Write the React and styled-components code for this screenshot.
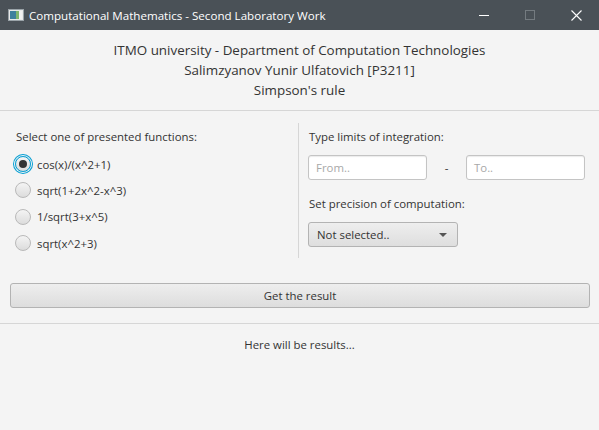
import styled, { createGlobalStyle } from "styled-components";

const GlobalStyle = createGlobalStyle`
  html, body {
    margin: 0;
    padding: 0;
    background: #f4f4f4;
  }
  * {
    box-sizing: border-box;
  }
`;

const Window = styled.div`
  width: 599px;
  height: 430px;
  background: #f4f4f4;
  font-family: "Open Sans", "Noto Sans", sans-serif;
  font-size: 11.4px;
  color: #333333;
  overflow: hidden;
`;

const TitleBar = styled.div`
  height: 30px;
  background: #4a5157;
  display: flex;
  align-items: center;
  color: #ffffff;
`;

const AppIcon = styled.div`
  width: 16px;
  height: 12px;
  margin: 0 5px 0 8px;
  display: flex;
`;

const TitleText = styled.span`
  flex: 1;
  font-size: 11.6px;
`;

const WinButton = styled.div`
  width: 46px;
  height: 30px;
  display: flex;
  align-items: center;
  justify-content: center;
`;

const Header = styled.div`
  padding: 10px 0;
  text-align: center;
  font-size: 13.4px;
  line-height: 20px;
  color: #333333;
  border-bottom: 1px solid #d6d6d6;
`;

const Main = styled.div`
  display: flex;
  padding: 12px 14px 0 15px;
  height: 147px;
`;

const LeftColumn = styled.div`
  width: 283px;
  display: flex;
  flex-direction: column;
`;

const RightColumn = styled.div`
  flex: 1;
  border-left: 1px solid #d6d6d6;
  padding-left: 9px;
  display: flex;
  flex-direction: column;
`;

const Label = styled.div`
  line-height: 20px;
  padding-top: 4px;
  margin-left: ${(p) => p.$indent || 0}px;
  margin-top: ${(p) => p.$gap || 0}px;
`;

const RadioList = styled.div`
  display: flex;
  flex-direction: column;
  margin-top: 4px;
`;

const RadioRow = styled.div`
  height: 26.3px;
  display: flex;
  align-items: center;
  gap: 6px;
`;

const RadioCircle = styled.span`
  width: 16px;
  height: 16px;
  border-radius: 50%;
  border: 1px solid #b9b9b9;
  background: linear-gradient(#f4f4f4, #dcdcdc);
  display: flex;
  align-items: center;
  justify-content: center;
  box-shadow: ${(p) =>
    p.$focused ? "0 0 0 1px #f4f4f4, 0 0 0 2px #039ed3" : "none"};
  border-color: ${(p) => (p.$focused ? "#039ed3" : "#b9b9b9")};

  &::after {
    content: "";
    display: ${(p) => (p.$checked ? "block" : "none")};
    width: 8px;
    height: 8px;
    border-radius: 50%;
    background: #333333;
  }
`;

const FieldRow = styled.div`
  display: flex;
  align-items: center;
  margin-top: 8px;
`;

const TextField = styled.div`
  width: 119px;
  height: 25px;
  border: 1px solid #c4c4c4;
  border-radius: 3px;
  background: #ffffff;
  box-shadow: inset 0 1px 1px #ececec;
  color: #a8a8a8;
  padding-left: 7px;
  display: flex;
  align-items: center;
`;

const Dash = styled.span`
  width: 39px;
  text-align: center;
`;

const Combo = styled.div`
  width: 150px;
  height: 25px;
  margin-top: 8px;
  border: 1px solid #b3b3b3;
  border-radius: 3px;
  background: linear-gradient(#eeeeee, #dedede);
  display: flex;
  align-items: center;
  justify-content: space-between;
  padding: 0 10px 0 8px;
`;

const Arrow = styled.span`
  width: 0;
  height: 0;
  border-left: 4px solid transparent;
  border-right: 4px solid transparent;
  border-top: 4px solid #555555;
`;

const ButtonRow = styled.div`
  padding: 25px 9px 15px 10px;
  border-bottom: 1px solid #d6d6d6;
`;

const ActionButton = styled.div`
  height: 25px;
  border: 1px solid #b3b3b3;
  border-radius: 3px;
  background: linear-gradient(#eeeeee, #dddddd);
  display: flex;
  align-items: center;
  justify-content: center;
`;

const Results = styled.div`
  text-align: center;
  line-height: 20px;
  padding-top: 11px;
`;

const functions = ["cos(x)/(x^2+1)", "sqrt(1+2x^2-x^3)", "1/sqrt(3+x^5)", "sqrt(x^2+3)"];

export default function App() {
  return (
    <>
      <GlobalStyle />
      <Window>
        <TitleBar>
          <AppIcon>
            <svg width="16" height="12" viewBox="0 0 16 12">
              <rect x="0.5" y="0.5" width="15" height="11" fill="#e8e8e8" stroke="#9aa3a8" />
              <rect x="2" y="2" width="6" height="8" fill="#3f7f9e" />
              <rect x="8" y="2" width="3" height="8" fill="#7fb56f" />
              <rect x="11" y="2" width="3" height="8" fill="#f0f0f0" />
            </svg>
          </AppIcon>
          <TitleText>Computational Mathematics - Second Laboratory Work</TitleText>
          <WinButton>
            <svg width="10" height="10" viewBox="0 0 10 10">
              <line x1="0" y1="5.5" x2="10" y2="5.5" stroke="#ffffff" strokeWidth="1" />
            </svg>
          </WinButton>
          <WinButton>
            <svg width="10" height="10" viewBox="0 0 10 10">
              <rect x="0.5" y="0.5" width="9" height="9" fill="none" stroke="#747b80" strokeWidth="1" />
            </svg>
          </WinButton>
          <WinButton>
            <svg width="11" height="11" viewBox="0 0 11 11">
              <path d="M0.5 0.5 L10.5 10.5 M10.5 0.5 L0.5 10.5" stroke="#ffffff" strokeWidth="1.1" />
            </svg>
          </WinButton>
        </TitleBar>

        <Header>
          <div>ITMO university - Department of Computation Technologies</div>
          <div>Salimzyanov Yunir Ulfatovich [P3211]</div>
          <div>Simpson's rule</div>
        </Header>

        <Main>
          <LeftColumn>
            <Label $indent={1}>Select one of presented functions:</Label>
            <RadioList>
              {functions.map((f, i) => (
                <RadioRow key={f}>
                  <RadioCircle $checked={i === 0} $focused={i === 0} />
                  <span>{f}</span>
                </RadioRow>
              ))}
            </RadioList>
          </LeftColumn>
          <RightColumn>
            <Label $indent={1}>Type limits of integration:</Label>
            <FieldRow>
              <TextField>From..</TextField>
              <Dash>-</Dash>
              <TextField>To..</TextField>
            </FieldRow>
            <Label $indent={1} $gap={10}>
              Set precision of computation:
            </Label>
            <Combo>
              <span>Not selected..</span>
              <Arrow />
            </Combo>
          </RightColumn>
        </Main>

        <ButtonRow>
          <ActionButton>Get the result</ActionButton>
        </ButtonRow>

        <Results>Here will be results...</Results>
      </Window>
    </>
  );
}
